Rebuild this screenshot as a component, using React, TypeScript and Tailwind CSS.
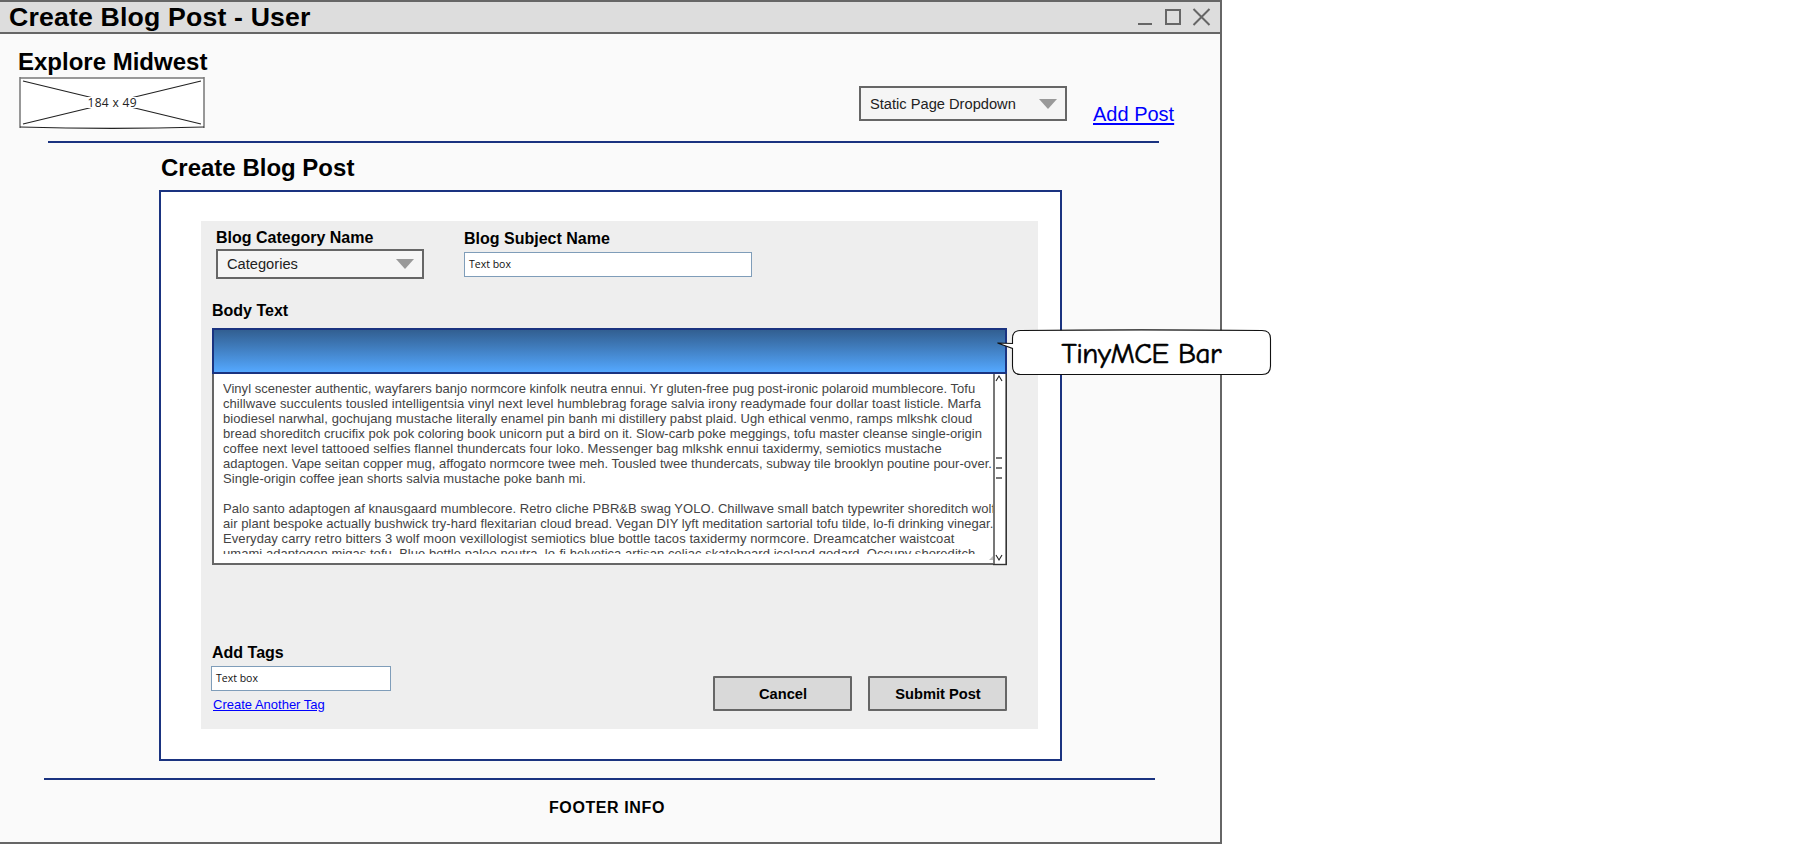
import React from "react";

const lines: { text: string; tracking: string }[] = [
  { tracking: "tracking-[0.022px]", text: "Vinyl scenester authentic, wayfarers banjo normcore kinfolk neutra ennui. Yr gluten-free pug post-ironic polaroid mumblecore. Tofu" },
  { tracking: "tracking-[0.064px]", text: "chillwave succulents tousled intelligentsia vinyl next level humblebrag forage salvia irony readymade four dollar toast listicle. Marfa" },
  { tracking: "tracking-[0.05px]", text: "biodiesel narwhal, gochujang mustache literally enamel pin banh mi distillery pabst plaid. Ugh ethical venmo, ramps mlkshk cloud" },
  { tracking: "tracking-[0.035px]", text: "bread shoreditch crucifix pok pok coloring book unicorn put a bird on it. Slow-carb poke meggings, tofu master cleanse single-origin" },
  { tracking: "tracking-[0.085px]", text: "coffee next level tattooed selfies flannel thundercats four loko. Messenger bag mlkshk ennui taxidermy, semiotics mustache" },
  { tracking: "tracking-[0.006px]", text: "adaptogen. Vape seitan copper mug, affogato normcore twee meh. Tousled twee thundercats, subway tile brooklyn poutine pour-over." },
  { tracking: "tracking-[0.04px]", text: "Single-origin coffee jean shorts salvia mustache poke banh mi." },
  { tracking: "tracking-normal", text: "" },
  { tracking: "tracking-[0.04px]", text: "Palo santo adaptogen af knausgaard mumblecore. Retro cliche PBR&B swag YOLO. Chillwave small batch typewriter shoreditch wolf" },
  { tracking: "tracking-[0.038px]", text: "air plant bespoke actually bushwick try-hard flexitarian cloud bread. Vegan DIY lyft meditation sartorial tofu tilde, lo-fi drinking vinegar." },
  { tracking: "tracking-[0.083px]", text: "Everyday carry retro bitters 3 wolf moon vexillologist semiotics blue bottle tacos taxidermy normcore. Dreamcatcher waistcoat" },
  { tracking: "tracking-[0.045px]", text: "umami adaptogen migas tofu. Blue bottle paleo neutra, lo-fi helvetica artisan celiac skateboard iceland godard. Occupy shoreditch" },
];

function Select({ label, className }: { label: string; className: string }) {
  return (
    <div className={`flex w-[208px] items-center justify-between border-2 border-[#666] bg-[#f5f5f5] pr-2 pl-[9px] text-[14.67px] leading-4 text-[#222] ${className}`}>
      <span>{label}</span>
      <svg width="18" height="10" viewBox="0 0 18 10">
        <path d="M0 0H18L9 10Z" fill="#999" />
      </svg>
    </div>
  );
}

function TextBox({ className }: { className: string }) {
  return (
    <div className={`flex h-[25px] items-center border border-[#7f9db9] bg-white pt-px pl-1 font-['Open_Sans',sans-serif] text-[10.5px] text-[#111] ${className}`}>
      Text box
    </div>
  );
}

function Button({ children }: { children: React.ReactNode }) {
  return (
    <button className="h-[35px] w-[139px] rounded-[1px] border-2 border-[#666] bg-[#d9d9d9] pl-px text-[14.67px] leading-4 font-bold">
      {children}
    </button>
  );
}

function Placeholder() {
  return (
    <svg width="187" height="54" viewBox="0 0 187 54" className="mt-px ml-[19px]">
      <path d="M1 1.5H185V50Q93 54 1 50Z" fill="#fff" />
      <path d="M1 0V51M185 0V51" stroke="#777" strokeWidth="1.5" fill="none" />
      <path d="M1 1H185" stroke="#777" strokeWidth="1.6" />
      <path d="M1 50Q93 52.6 185 50" stroke="#222" strokeWidth="1.2" fill="none" />
      <path d="M4 4L182 47M4 47L182 4" stroke="#222" strokeWidth="1.2" />
      <rect x="66" y="20" width="54" height="11" fill="#fff" />
      <text x="93" y="30" textAnchor="middle" fontFamily="'Comic Sans MS', 'Open Sans', sans-serif" fontSize="12" textLength="49" fill="#222">184 x 49</text>
    </svg>
  );
}

function Scrollbar() {
  return (
    <svg width="14" height="192" viewBox="0 0 14 192" className="block shrink-0">
      <path d="M0 0H14V191H0Z" fill="#fff" />
      <path d="M1 0V191" stroke="#777" strokeWidth="2" />
      <path d="M13.2 0V191" stroke="#333" strokeWidth="1.6" />
      <path d="M0 190.5H14" stroke="#333" strokeWidth="1.4" />
      <path d="M3 7L6 2L9 7M3 181L6 186L9 181" stroke="#222" strokeWidth="1.1" fill="none" />
      <path d="M3 84H9M3 94H9M3 104H9" stroke="#777" strokeWidth="2" />
    </svg>
  );
}

function Callout() {
  return (
    <svg width="276" height="48" viewBox="0 0 276 48" className="absolute top-[329px] left-[996px]">
      <path
        d="M16.5 9.5Q16.5 1.5 24.5 1.5Q146 0.3 266 1.5Q274.5 1.5 274.5 9.5V37Q274.5 45.5 266 45.5H24.5Q16.5 45.5 16.5 37V19.5L1.5 14L16.5 14.5Z"
        fill="#fff"
        stroke="#111"
        strokeWidth="1.1"
      />
      <text x="65.5" y="34" fontFamily="'Comic Sans MS', 'Comic Neue', Lato, sans-serif" fontSize="29" textLength="160" fill="#000" stroke="#000" strokeWidth="0.6">TinyMCE Bar</text>
    </svg>
  );
}

export default function App() {
  return (
    <div className="relative h-[859px] w-[1805px] overflow-hidden bg-white font-['Liberation_Sans',Arial,sans-serif] text-black">
      <div className="flex h-[844px] w-[1222px] flex-col border-y-2 border-r-2 border-[#666] bg-[#fafafa]">
        <header className="flex h-8 shrink-0 items-center justify-between border-b-2 border-[#666] bg-[#ddd] pr-[9px] pl-[9px]">
          <h1 className="text-[26.67px] leading-7 font-bold tracking-[0.17px]">Create Blog Post - User</h1>
          <svg width="74" height="18" viewBox="0 0 74 18" fill="none" stroke="#666" strokeWidth="2">
            <path d="M1 16H15" />
            <rect x="29" y="2" width="14" height="14" />
            <path d="M56.5 1L72.5 17M72.5 1L56.5 17" />
          </svg>
        </header>

        <div className="flex h-[107px] shrink-0 items-start">
          <div className="w-[859px] pt-3.5">
            <div className="pl-[18px] text-2xl leading-7 font-bold">Explore Midwest</div>
            <Placeholder />
          </div>
          <Select label="Static Page Dropdown" className="mt-[52px] h-[35px]" />
          <a className="mt-[68px] ml-[26px] text-xl leading-6 text-[#00f] underline decoration-2 underline-offset-2">Add Post</a>
        </div>
        <hr className="ml-12 h-0.5 w-[1111px] shrink-0 border-0 bg-[#1a3380]" />
        <h2 className="h-[47px] shrink-0 pt-[11px] pl-[161px] text-2xl leading-7 font-bold">Create Blog Post</h2>

        <main className="ml-[159px] flex h-[571px] w-[903px] shrink-0 border-2 border-[#1a3380] bg-white pt-[29px] pl-10">
          <form className="flex h-[508px] w-[837px] flex-col bg-[#eee]">
            <div className="flex h-[78px]">
              <div className="w-[263px] pt-[7px] pl-[15px]">
                <label className="mb-px block text-base leading-5 font-bold">Blog Category Name</label>
                <Select label="Categories" className="h-[30px]" />
              </div>
              <div className="pt-2">
                <label className="mb-[3px] block text-base leading-5 font-bold">Blog Subject Name</label>
                <TextBox className="w-72" />
              </div>
            </div>
            <label className="h-[29px] pt-0.5 pl-[11px] text-base leading-5 font-bold">Body Text</label>
            <div className="ml-[11px] flex h-[238px] w-[795px] flex-col">
              <div className="h-[46px] shrink-0 border-2 border-[#1a3380] bg-linear-to-b from-[#325f91] to-[#54a8ff]" />
              <div className="flex">
                <div className="relative h-[191px] w-[781px] border-b-2 border-l-2 border-[#666] bg-white pt-[7px] pl-[9px]">
                  <div className="h-[173px] overflow-hidden text-[13px] leading-[15px] whitespace-nowrap text-[#444]">
                    {lines.map((line, i) => (
                      <div key={i} className={`h-[15px] ${line.tracking}`}>{line.text}</div>
                    ))}
                  </div>
                  <svg width="4" height="4" viewBox="0 0 4 4" className="absolute right-0 bottom-[3px]">
                    <path d="M4 0V4H0Z" fill="#bbb" />
                  </svg>
                </div>
                <Scrollbar />
              </div>
            </div>
            <div className="flex items-start justify-between pt-[77px] pr-[31px] pl-2.5">
              <div>
                <label className="mb-[3px] block pl-px text-base leading-5 font-bold">Add Tags</label>
                <TextBox className="w-[180px]" />
                <a className="mt-1.5 block pl-0.5 text-[13px] leading-4 text-[#00f] underline underline-offset-1">Create Another Tag</a>
              </div>
              <div className="flex gap-4 pt-[33px]">
                <Button>Cancel</Button>
                <Button>Submit Post</Button>
              </div>
            </div>
          </form>
        </main>

        <hr className="mt-[17px] ml-11 h-0.5 w-[1111px] shrink-0 border-0 bg-[#1a3380]" />
        <footer className="pt-[18px] pl-[549px] text-base leading-5 font-bold tracking-[0.6px]">FOOTER INFO</footer>
      </div>
      <Callout />
    </div>
  );
}
